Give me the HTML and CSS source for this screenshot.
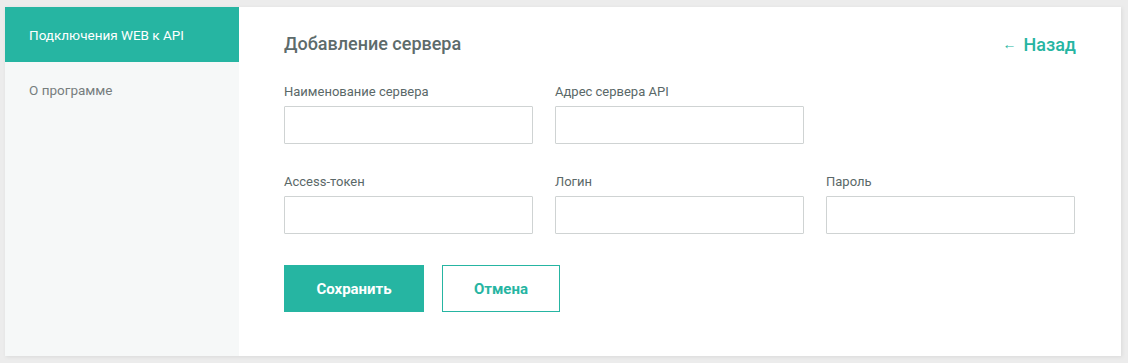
FILE: index.html
```html
<!DOCTYPE html>
<html lang="ru">
<head>
<meta charset="UTF-8">
<title>Добавление сервера</title>
<link rel="stylesheet" href="styles.css">
</head>
<body>
<div class="card">
  <nav class="sidebar">
    <a class="nav-item active" href="#">Подключения WEB к API</a>
    <a class="nav-item" href="#">О программе</a>
  </nav>

  <main class="content">
    <div class="head-row">
      <h1>Добавление сервера</h1>
      <a class="back" href="#"><span class="back-arrow">←</span>Назад</a>
    </div>

    <div class="fields">
      <label class="field">
        <span class="field-label">Наименование сервера</span>
        <input type="text">
      </label>
      <label class="field">
        <span class="field-label">Адрес сервера API</span>
        <input type="text">
      </label>
      <div></div>
      <label class="field">
        <span class="field-label">Access-токен</span>
        <input type="text">
      </label>
      <label class="field">
        <span class="field-label">Логин</span>
        <input type="text">
      </label>
      <label class="field">
        <span class="field-label">Пароль</span>
        <input type="password">
      </label>
    </div>

    <div class="actions">
      <button class="btn btn-primary">Сохранить</button>
      <button class="btn btn-outline">Отмена</button>
    </div>
  </main>
</div>
</body>
</html>
```

FILE: styles.css
```css
:root {
  --teal: #26b5a2;
  --text: #5d6b6b;
  --muted: #777e7e;
  --border: #cfd3d3;
  --side-bg: #f6f8f8;
  --page-bg: #ececec;
}
* { box-sizing: border-box; margin: 0; padding: 0; }
body { font-family: Roboto, 'Noto Sans', sans-serif; background: var(--page-bg); padding: 7px 7px 7px 5px; color: var(--text); }

.card { display: flex; background: #fff; height: 349px; box-shadow: 1px 1px 4px rgba(0,0,0,0.08); }

.sidebar { width: 234px; background: var(--side-bg); display: flex; flex-direction: column; }
.nav-item { display: flex; align-items: center; height: 55px; padding: 0 24px; font-size: 13.5px; color: var(--muted); text-decoration: none; }
.nav-item.active { background: var(--teal); color: #fff; }

.content { flex: 1; padding: 25px 45px 44px; }
.head-row { display: flex; align-items: center; justify-content: space-between; height: 24px; }
h1 { font-size: 18px; font-weight: 500; color: var(--text); line-height: 24px; }
.back { color: var(--teal); text-decoration: none; font-size: 18px; font-weight: 500; display: flex; align-items: center; }
.back-arrow { font-size: 14px; font-weight: 400; margin-right: 7px; }

.fields { display: grid; grid-template-columns: repeat(3, 249px); column-gap: 22px; row-gap: 30px; margin-top: 28px; }
.field { display: flex; flex-direction: column; }
.field-label { font-size: 13px; line-height: 16px; font-weight: 400; color: #5a6868; margin-bottom: 6px; }
.field input { height: 38px; border: 1px solid var(--border); border-radius: 1px; padding: 0 10px; font-family: inherit; font-size: 14px; color: var(--text); background: #fff; }
.field input:focus { outline: none; border-color: var(--teal); }

.actions { display: flex; gap: 18px; margin-top: 31px; }
.btn { height: 47px; font-family: inherit; font-size: 15px; font-weight: 700; cursor: pointer; border: 1px solid var(--teal); }
.btn-primary { width: 140px; background: var(--teal); color: #fff; }
.btn-outline { width: 118px; background: #fff; color: var(--teal); }
```
